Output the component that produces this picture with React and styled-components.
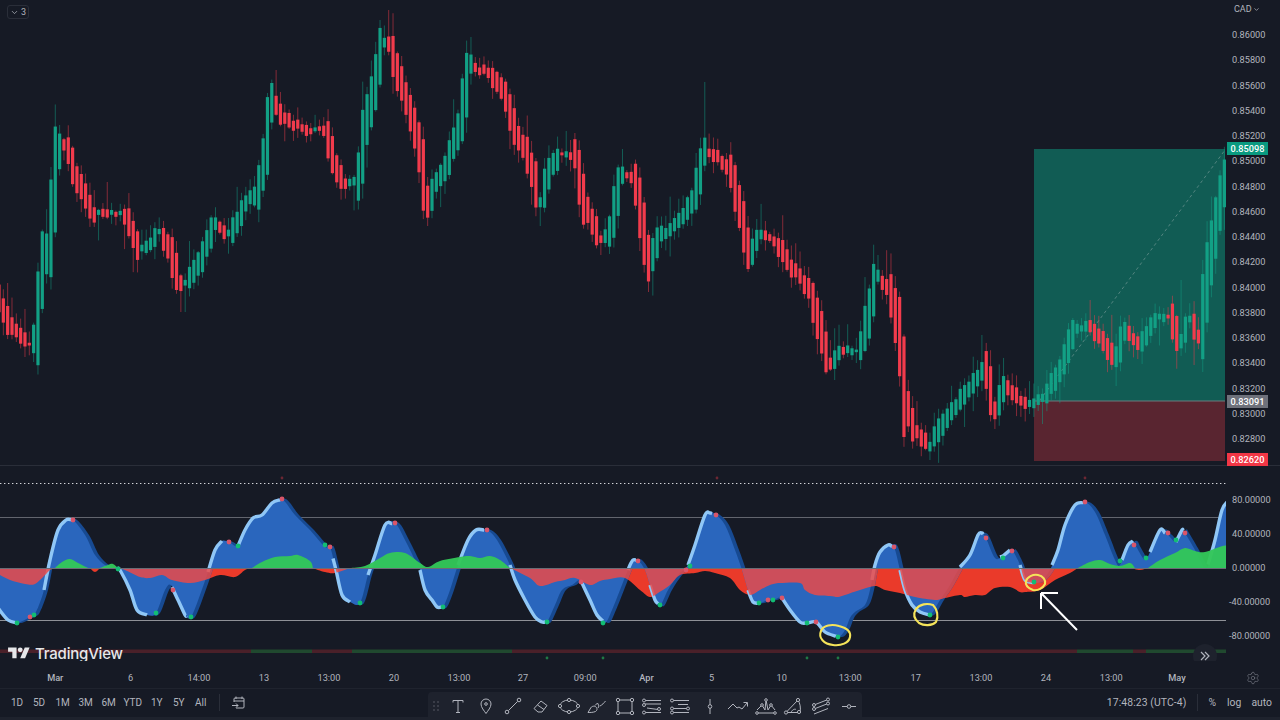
import styled, { createGlobalStyle } from "styled-components";
import { ChevronDown, Settings } from "lucide-react";

const GlobalStyle = createGlobalStyle`
  html, body {
    margin: 0;
    padding: 0;
    background: #161a25;
  }
  body {
    font-family: Roboto, "Liberation Sans", sans-serif;
    overflow: hidden;
  }
`;

const Screen = styled.div`
  width: 1280px;
  height: 720px;
  display: flex;
  flex-direction: column;
  background: #161a25;
  color: #b2b5be;
  overflow: hidden;
`;

const PaneRow = styled.div`
  display: flex;
  height: ${(p) => p.$height}px;
  flex: none;
  ${(p) => p.$divided && "border-bottom: 1px solid #2a2e39;"}
`;

const Plot = styled.div`
  position: relative;
  width: 1226px;
  flex: none;
  overflow: hidden;

  & > svg {
    display: block;
  }
`;

const PriceAxis = styled.div`
  position: relative;
  flex: 1;
  display: flex;
  flex-direction: column;
  padding-top: ${(p) => p.$top}px;
  padding-left: 6px;
`;

const AxisLabel = styled.div`
  height: ${(p) => p.$step}px;
  line-height: ${(p) => p.$step}px;
  font-size: 9.2px;
  flex: none;
  margin-left: ${(p) => (p.$negative ? "-3px" : "0")};
`;

const CurrencyLabel = styled.div`
  position: absolute;
  left: 8px;
  top: 3px;
  display: flex;
  align-items: center;
  gap: 1px;
  font-size: 9px;
  line-height: 12px;
`;

const PriceTag = styled.div`
  position: absolute;
  left: 1px;
  top: ${(p) => p.$top}px;
  width: 41px;
  height: 13px;
  line-height: 13px;
  text-align: center;
  font-size: 9.2px;
  font-weight: 500;
  color: #fff;
  background: ${(p) => p.$bg};
`;

const CollapseButton = styled.div`
  position: absolute;
  left: 7px;
  top: 5px;
  width: 22px;
  height: 14px;
  box-sizing: border-box;
  border: 1px solid #2a2e39;
  border-radius: 3px;
  display: flex;
  align-items: center;
  justify-content: center;
  gap: 2px;
  font-size: 9px;
`;

const Watermark = styled.div`
  position: absolute;
  left: 8px;
  bottom: 0;
  height: 16px;
  display: flex;
  align-items: center;
  gap: 5px;
  font-family: Inter, "Liberation Sans", sans-serif;
  font-size: 15px;
  font-weight: 500;
  letter-spacing: -0.2px;
  color: #e6e7ea;
`;

const ScrollButton = styled.div`
  position: absolute;
  left: 1193px;
  top: 178px;
  width: 24px;
  height: 24px;
  border-radius: 50%;
  background: #1e222d;
  display: flex;
  align-items: center;
  justify-content: center;
`;

const TimeRow = styled.div`
  display: flex;
  height: 28px;
  flex: none;
  box-sizing: border-box;
  padding-top: 6px;
  border-bottom: 1px solid #1f232e;
`;

const TimeTrack = styled.div`
  display: flex;
  width: 1226px;
  flex: none;
  padding-left: 16px;
  box-sizing: border-box;
  align-items: center;
`;

const TimeTick = styled.div`
  flex: none;
  text-align: center;
  font-size: 9.2px;
  font-weight: ${(p) => (p.$month ? 500 : 400)};
`;

const GearCell = styled.div`
  flex: 1;
  display: flex;
  justify-content: flex-end;
  align-items: center;
  padding-right: 20px;
  color: #787b86;
`;

const BottomBar = styled.div`
  flex: 1;
  display: grid;
  grid-template-columns: 428px 434px 1fr;
  box-shadow: inset 0 -3px 0 #1e222d;
`;

const RangeGroup = styled.div`
  display: flex;
  align-items: center;
  padding-left: 11px;
  padding-bottom: 4px;
`;

const RangeButton = styled.div`
  width: ${(p) => p.$width}px;
  font-size: 10px;
  flex: none;
`;

const BarDivider = styled.div`
  width: 1px;
  height: 17px;
  background: #2a2e39;
  margin: 0 ${(p) => p.$right}px 0 ${(p) => p.$left}px;
  flex: none;
`;

const CalendarIcon = styled.svg`
  width: 15px;
  height: 15px;
  flex: none;
`;

const DrawingToolbar = styled.div`
  display: flex;
  align-items: center;
  align-self: end;
  height: 28px;
  background: #1e222d;
  border-radius: 4px 4px 0 0;
`;

const Grip = styled.div`
  width: 16px;
  height: 10px;
  flex: none;
  display: grid;
  grid-template-columns: 2px 2px;
  grid-template-rows: repeat(3, 2px);
  gap: 2px 2px;
  justify-content: center;
  align-content: center;

  & i {
    background: #434651;
    border-radius: 50%;
  }
`;

const ToolCell = styled.div`
  width: 27.8px;
  flex: none;
  display: flex;
  justify-content: center;
  margin-left: ${(p) => (p.$shift ? "2px" : "0")};

  & svg {
    width: 22px;
    height: 18px;
    fill: none;
    stroke: #b2b5be;
    stroke-width: 1;
  }
`;

const ClockGroup = styled.div`
  display: flex;
  align-items: center;
  justify-content: flex-end;
  padding-right: 8px;
  padding-bottom: 4px;
  font-size: 10.4px;
`;

const ClockText = styled.div`
  letter-spacing: 0.1px;
`;

const ScaleToggle = styled.div`
  margin-left: ${(p) => p.$gap}px;
`;

// price path read off the chart, x / y of the candle centres
const pricePath = [
  [-2, 298], [10, 325], [20, 335], [30, 345], [37, 330], [42, 270], [50, 240], [57, 160], [62, 145], [68, 150],
  [75, 175], [85, 195], [95, 215], [110, 212], [125, 215], [140, 250], [150, 245], [160, 232], [170, 250], [180, 285],
  [188, 282], [200, 262], [215, 225], [230, 235], [245, 205], [258, 190], [265, 155], [272, 100], [282, 115], [295, 125],
  [310, 130], [325, 130], [335, 165], [345, 185], [358, 180], [365, 130], [375, 85], [383, 40], [390, 45], [400, 80],
  [410, 110], [420, 150], [428, 205], [435, 185], [445, 170], [460, 125], [470, 65], [480, 70], [490, 72], [505, 95],
  [515, 130], [525, 150], [535, 180], [540, 205], [550, 170], [560, 155], [575, 155], [585, 205], [600, 240], [610, 230],
  [622, 175], [635, 180], [650, 265], [660, 235], [670, 230], [685, 215], [695, 195], [705, 150], [715, 155], [730, 170],
  [740, 210], [750, 255], [760, 235], [775, 240], [790, 265], [810, 290], [822, 335], [830, 365], [840, 350], [860, 350],
  [870, 310], [877, 275], [890, 290], [900, 340], [905, 400], [915, 430], [930, 445], [945, 420], [960, 400], [975, 380],
  [985, 365], [995, 410], [1005, 385], [1020, 400], [1030, 405], [1045, 395], [1060, 370], [1075, 330], [1090, 325], [1105, 345],
  [1115, 360], [1125, 330], [1140, 345], [1155, 320], [1170, 315], [1180, 345], [1190, 320], [1200, 340], [1210, 260], [1218, 215],
  [1226, 175],
];

// longest wicks of the chart, x / y of the tip
const wickHighs = [[60, 125], [274, 70], [387, 10], [473, 37], [572, 140], [703, 82], [876, 255], [980, 335], [1090, 300], [1180, 280]];
const wickLows = [[33, 362], [183, 312], [427, 226], [540, 226], [600, 255], [650, 292], [750, 272], [835, 380], [930, 460], [1115, 386], [1195, 365]];

const wave = [
  [-2, 608], [8, 620], [17, 623], [30, 617], [36, 612], [44, 590], [50, 560], [58, 530], [66, 520], [73, 520],
  [85, 535], [95, 555], [105, 565], [115, 568], [120, 570], [130, 590], [137, 610], [147, 615], [156, 613], [165, 590],
  [171, 585], [178, 600], [185, 615], [191, 617], [200, 595], [208, 572], [215, 550], [222, 541], [229, 542], [238, 546],
  [245, 530], [253, 518], [262, 515], [272, 503], [282, 499], [295, 515], [310, 530], [325, 547], [330, 547], [336, 570],
  [342, 595], [350, 602], [360, 603], [368, 575], [375, 555], [385, 525], [395, 523], [405, 540], [415, 560], [420, 570],
  [425, 590], [432, 600], [437, 607], [443, 607], [450, 590], [458, 565], [468, 540], [476, 530], [487, 530], [497, 540],
  [510, 565], [515, 580], [525, 600], [535, 617], [542, 622], [547, 622], [555, 605], [562, 590], [572, 585], [581, 581],
  [590, 600], [597, 615], [605, 623], [612, 610], [620, 590], [630, 565], [633, 560], [638, 560], [645, 570], [650, 585],
  [655, 600], [660, 606], [668, 590], [678, 575], [688, 565], [695, 545], [705, 515], [710, 513], [716, 515], [725, 525],
  [735, 550], [742, 570], [748, 590], [753, 602], [760, 603], [768, 600], [773, 600], [782, 598], [790, 610], [800, 622],
  [807, 623], [816, 622], [825, 632], [838, 637], [845, 630], [850, 618], [855, 612], [865, 605], [870, 590], [875, 565],
  [880, 552], [888, 545], [894, 547], [900, 570], [905, 590], [912, 605], [920, 612], [930, 615], [940, 600], [950, 585],
  [960, 567], [970, 555], [978, 535], [982, 533], [986, 538], [995, 558], [1003, 556], [1010, 550], [1013, 551], [1020, 565],
  [1025, 580], [1035, 583], [1042, 580], [1050, 570], [1058, 550], [1065, 525], [1075, 505], [1085, 502], [1095, 512], [1105, 535],
  [1115, 560], [1120, 565], [1128, 545], [1133, 541], [1137, 548], [1145, 560], [1150, 552], [1160, 530], [1168, 535], [1176, 542],
  [1182, 530], [1185, 533], [1195, 550], [1200, 560], [1207, 568], [1215, 540], [1222, 510], [1228, 501],
];

// the pale stroke only runs on the side of each hump moving away from zero
const paleRuns = [
  [-2, 17], [44, 72], [118, 147], [172, 186], [208, 222], [238, 280], [333, 350], [368, 392], [420, 442], [458, 484],
  [510, 545], [582, 603], [628, 636], [650, 658], [688, 712], [748, 760], [782, 836], [872, 892], [900, 930], [960, 983],
  [1000, 1010], [1020, 1034], [1052, 1083], [1122, 1133], [1150, 1165], [1176, 1183], [1208, 1228],
];

const redHumps = [
  [[-2, 574], [10, 580], [25, 584], [35, 584], [45, 575], [50, 570], [55, 568]],
  [[90, 568], [95, 572], [100, 568]],
  [[118, 568], [125, 570], [140, 577], [150, 578], [162, 575], [172, 580], [190, 583], [205, 580], [220, 575], [235, 577], [245, 570], [252, 568]],
  [[312, 568], [325, 572], [335, 573], [350, 568]],
  [[510, 568], [530, 578], [540, 586], [555, 582], [565, 580], [575, 578], [590, 585], [600, 581], [610, 579], [625, 578], [640, 590], [650, 597], [658, 593], [670, 585], [680, 575], [695, 573], [705, 571], [715, 573], [730, 578], [740, 590], [750, 595], [760, 590], [770, 585], [780, 583], [800, 583], [805, 590], [815, 595], [830, 596], [838, 597], [845, 595], [860, 590], [875, 586], [885, 590], [900, 593], [915, 597], [935, 600], [945, 598], [960, 595], [965, 597], [975, 595], [985, 595], [995, 588], [1010, 587], [1020, 592], [1025, 592], [1040, 590], [1055, 580], [1070, 573], [1078, 568]],
  [[1130, 568], [1140, 570], [1148, 568]],
];

const greenHumps = [
  [[55, 568], [62, 562], [70, 559], [78, 563], [88, 568]],
  [[100, 568], [108, 565], [113, 564], [118, 568]],
  [[252, 568], [262, 562], [275, 557], [290, 556], [298, 555], [310, 561], [313, 568]],
  [[350, 568], [365, 566], [380, 558], [390, 553], [405, 553], [420, 563], [428, 567], [440, 561], [460, 557], [470, 556], [480, 558], [490, 556], [500, 560], [510, 568]],
  [[1078, 568], [1090, 562], [1100, 560], [1110, 564], [1120, 566], [1130, 563], [1135, 568]],
  [[1148, 568], [1160, 560], [1175, 553], [1185, 548], [1195, 551], [1205, 552], [1228, 546], [1228, 568]],
];

const greenDots = [
  [17, 623], [34, 615], [118, 569], [156, 613], [191, 617], [238, 546], [325, 545], [360, 603], [443, 607], [547, 622],
  [603, 623], [660, 605], [690, 566], [759, 603], [773, 600], [807, 623], [838, 637], [930, 615], [1003, 558], [1034, 582],
  [1120, 561], [1176, 540], [1146, 558],
];
const redDots = [
  [30, 617], [73, 520], [173, 590], [229, 542], [282, 499], [330, 547], [395, 523], [487, 530], [581, 582], [638, 561],
  [686, 570], [716, 515], [768, 600], [782, 598], [816, 622], [894, 547], [986, 538], [1012, 551], [1085, 502], [1134, 545],
  [1168, 533], [1185, 533],
];

const strip = [
  [0, 251, "#4a2029"], [251, 312, "#20492f"], [312, 352, "#4a2029"], [352, 512, "#20492f"], [512, 1077, "#4a2029"],
  [1077, 1133, "#20492f"], [1133, 1146, "#4a2029"], [1146, 1226, "#20492f"],
];

const timeTicks = [
  ["Mar", 55, true], ["6", 134], ["14:00", 199], ["13", 264], ["13:00", 329], ["20", 394], ["13:00", 459], ["27", 524],
  ["09:00", 585], ["Apr", 647, true], ["5", 707], ["10", 785], ["13:00", 850], ["17", 916], ["13:00", 981], ["24", 1046],
  ["13:00", 1111], ["May", 1177, true],
];

const upperLabels = [
  "0.86000", "0.85800", "0.85600", "0.85400", "0.85200", "0.85000", "0.84800", "0.84600", "0.84400",
  "0.84200", "0.84000", "0.83800", "0.83600", "0.83400", "0.83200", "0.83000", "0.82800",
];
const lowerLabels = ["80.00000", "40.00000", "0.00000", "-40.00000", "-80.00000"];

const ranges = [
  ["1D", 22], ["5D", 22.5], ["1M", 23], ["3M", 23], ["6M", 22], ["YTD", 27.500], ["1Y", 22], ["5Y", 22], ["All", 24],
];

const interp = (points, x) => {
  for (let i = 1; i < points.length; i++) {
    if (x <= points[i][0]) {
      const [x0, y0] = points[i - 1];
      const [x1, y1] = points[i];
      return y0 + ((y1 - y0) * (x - x0)) / (x1 - x0);
    }
  }
  return points[points.length - 1][1];
};

const smooth = (pts) => {
  let d = `M${pts[0][0]} ${pts[0][1]}`;
  for (let i = 0; i < pts.length - 1; i++) {
    const p0 = pts[i - 1] || pts[i];
    const p1 = pts[i];
    const p2 = pts[i + 1];
    const p3 = pts[i + 2] || p2;
    const c1x = p1[0] + (p2[0] - p0[0]) / 6;
    const c1y = p1[1] + (p2[1] - p0[1]) / 6;
    const c2x = p2[0] - (p3[0] - p1[0]) / 6;
    const c2y = p2[1] - (p3[1] - p1[1]) / 6;
    d += `C${c1x.toFixed(1)} ${c1y.toFixed(1)} ${c2x.toFixed(1)} ${c2y.toFixed(1)} ${p2[0]} ${p2[1].toFixed(1)}`;
  }
  return d;
};

const toZero = (pts, dx = 0) => {
  const moved = pts.map(([x, y]) => [x + dx, y]);
  return `${smooth(moved)}L${moved[moved.length - 1][0]} 568L${moved[0][0]} 568Z`;
};

const paleRun = ([a, b]) => {
  const inner = wave.filter(([x]) => x > a && x < b);
  return smooth([[a, interp(wave, a)], ...inner, [b, interp(wave, b)]]);
};

const nearest = (list, x) => list.find(([px]) => Math.abs(px - x) <= 2.2);

const makeCandles = () => {
  let seed = 4711;
  const rnd = () => {
    seed = (seed * 16807) % 2147483647;
    return seed / 2147483647;
  };
  const out = [];
  for (let i = 0; i < 284; i++) {
    const x = -1 + i * 4.33;
    const slope = interp(pricePath, x + 2.2) - interp(pricePath, x - 2.2);
    const center = interp(pricePath, x) + (rnd() - 0.5) * 4;
    const half = 0.8 + Math.abs(slope) * 1.1 + rnd() * 3.2;
    const up = Math.abs(slope) < 1.2 ? rnd() > 0.5 : slope < 0;
    const topTail = rnd() > 0.72 ? 28 : 12;
    const lowTail = rnd() > 0.72 ? 26 : 12;
    const peak = nearest(wickHighs, x);
    const dip = nearest(wickLows, x);
    out.push({
      x,
      up,
      top: center - half,
      height: half * 2,
      high: peak ? peak[1] : center - half - rnd() * topTail - 1,
      low: dip ? dip[1] : center + half + rnd() * lowTail + 1,
    });
  }
  return out;
};

const candles = makeCandles();

const CandleChart = () => (
  <svg width="1226" height="465" viewBox="0 0 1226 465">
    <rect x="1034" y="149" width="191" height="252" fill="#115c54" />
    <rect x="1034" y="401" width="191" height="60" fill="#592530" />
    <line x1="1034" y1="401" x2="1225" y2="401" stroke="#6d7a7c" strokeWidth="1.2" />
    <line x1="1040" y1="400" x2="1225" y2="150" stroke="#b9c4c4" strokeOpacity="0.4" strokeDasharray="3 3" />
    {candles.map((c) => {
      const color = c.up ? "#12a085" : "#f23b4c";
      return (
        <g key={c.x}>
          <line x1={c.x} x2={c.x} y1={c.high} y2={c.low} stroke={color} strokeOpacity="0.5" />
          <rect x={c.x - 1.6} y={c.top} width="3.2" height={c.height} fill={color} />
        </g>
      );
    })}
  </svg>
);

const OscillatorChart = () => (
  <svg width="1226" height="195" viewBox="0 466 1226 195">
    <defs>
      <clipPath id="blue-body">
        <path d={toZero(wave)} />
        <path d={toZero(wave, 4)} />
      </clipPath>
    </defs>
    <line x1="0" x2="1226" y1="483.5" y2="483.5" stroke="#d5d7dc" strokeDasharray="1.4 2.6" />
    <line x1="0" x2="1226" y1="517.5" y2="517.5" stroke="#62656e" />
    <line x1="0" x2="1226" y1="620.5" y2="620.5" stroke="#8f9197" />
    {redHumps.map((h, i) => (
      <path key={i} d={toZero(h)} fill="#ea3a2a" />
    ))}
    <path d={toZero(wave, 4)} fill="#174a92" />
    <path d={toZero(wave)} fill="#2a66bd" />
    {paleRuns.map((r) => (
      <path key={r[0]} d={paleRun(r)} fill="none" stroke="#90c7f6" strokeWidth="3.4" />
    ))}
    <g clipPath="url(#blue-body)">
      {redHumps.map((h, i) => (
        <path key={i} d={toZero(h)} fill="#ec4a47" fillOpacity="0.84" />
      ))}
    </g>
    {greenHumps.map((h, i) => (
      <path key={i} d={toZero(h)} fill="#33c758" fillOpacity="0.96" />
    ))}
    <line x1="0" x2="1226" y1="568.5" y2="568.5" stroke="#6a6c75" />
    {redDots.map(([x, y]) => (
      <circle key={x} cx={x} cy={y} r="2.4" fill="#d9566a" />
    ))}
    {greenDots.map(([x, y]) => (
      <circle key={x} cx={x} cy={y} r="2.4" fill="#12bd74" />
    ))}
    {strip.map(([a, b, color]) => (
      <rect key={a} x={a} y="649.5" width={b - a} height="3.5" fill={color} />
    ))}
    {[547, 603, 807, 838].map((x) => (
      <circle key={x} cx={x} cy="658" r="1.4" fill="#1f7a45" />
    ))}
    {[282, 717, 1085].map((x) => (
      <circle key={x} cx={x} cy="478" r="1.4" fill="#6d2733" />
    ))}
    <g fill="none" stroke="#f5e45a" strokeWidth="2.1">
      <path d="M821 631c2-6 11-7 18-5 8 2 12 6 11 11-1 6-9 9-17 8-9-1-15-7-12-14z" />
      <path d="M916 609c4-5 11-6 17-4 4 4 6 11 3 17-4 4-12 4-17 1-5-4-6-9-3-14z" />
      <path d="M1026 581c1-4 7-7 12-6 5 1 8 5 7 9-2 4-7 7-12 6-5-2-8-5-7-9z" />
    </g>
    <path d="M1077 630L1041 593M1041 593H1058M1041 593V609" fill="none" stroke="#fff" strokeWidth="2" />
  </svg>
);

const toolIcons = [
  <path key="t" d="M6 3.500h10M6 3.500v2M16 3.500v2M11 3.500v12M9 15.500h4" />,
  <g key="pin">
    <path d="M11 16.500c-2-3-5-6-5-9.500a5 5 0 0 1 10 0c0 3.500-3 6.500-5 9.500z" />
    <circle cx="11" cy="7" r="1.300" />
  </g>,
  <g key="line">
    <path d="M6.500 13.500L15.500 4.500" />
    <circle cx="5" cy="15" r="1.800" />
    <circle cx="17" cy="3" r="1.800" />
  </g>,
  <path key="eraser" d="M8 15L4 11.500L11 4L17 8.500L12 15H8ZM7.500 8L14 12.500" />,
  <g key="ellipse">
    <ellipse cx="11" cy="9" rx="9" ry="6" />
    <circle cx="2" cy="9" r="1.600" fill="#1e222d" />
    <circle cx="20" cy="9" r="1.600" fill="#1e222d" />
    <circle cx="11" cy="3" r="1.600" fill="#1e222d" />
    <circle cx="11" cy="15" r="1.600" fill="#1e222d" />
  </g>,
  <path key="brush" d="M2 15.500L5 10.500C6 9 9 8.500 10.500 10.500C11.500 12 11 13.500 9.500 14.500C7 15.500 4.500 15.500 2 15.500ZM9 8.500L11.500 6L13 9L12 11M14 9C16 8 18 6 19.500 4" />,
  <g key="rect">
    <rect x="4" y="3" width="14" height="13" />
    <circle cx="4" cy="3" r="1.700" fill="#1e222d" />
    <circle cx="18" cy="3" r="1.700" fill="#1e222d" />
    <circle cx="4" cy="16" r="1.700" fill="#1e222d" />
    <circle cx="18" cy="16" r="1.700" fill="#1e222d" />
  </g>,
  <g key="fib">
    <path d="M4 3.500H20M4 7H20M6 11L17 12.500M4 15.500H20" />
    <circle cx="3" cy="3.500" r="1.500" fill="#1e222d" />
    <circle cx="3" cy="8" r="1.500" fill="#1e222d" />
    <circle cx="18" cy="12" r="1.500" fill="#1e222d" />
    <circle cx="3" cy="15.500" r="1.500" fill="#1e222d" />
  </g>,
  <g key="fib2">
    <path d="M4 3.500H20M9 7.500H19M4 11.500H20M4 15.500H20" />
    <circle cx="3" cy="3.500" r="1.500" fill="#1e222d" />
    <circle cx="3" cy="11.500" r="1.500" fill="#1e222d" />
    <circle cx="19" cy="11.500" r="1.500" fill="#1e222d" />
    <circle cx="3" cy="15.500" r="1.500" fill="#1e222d" />
  </g>,
  <g key="vertical">
    <path d="M11 2V17" />
    <circle cx="11" cy="9.500" r="1.800" fill="#1e222d" />
  </g>,
  <path key="path" d="M1 12L6 7L10 11L12 10L15 12L20 6M16.500 5.500H20.500V9.500" />,
  <g key="pattern">
    <path d="M2 13L7 8L10 13L11 3L13 13L16 8L20 13M2 16H20" />
    <circle cx="2" cy="16" r="1.300" fill="#1e222d" />
    <circle cx="7" cy="8" r="1.300" fill="#1e222d" />
    <circle cx="11" cy="3" r="1.300" fill="#1e222d" />
    <circle cx="16" cy="8" r="1.300" fill="#1e222d" />
    <circle cx="20" cy="16" r="1.300" fill="#1e222d" />
  </g>,
  <g key="fan">
    <path d="M4 15.500L16 3M4 15.500H18C19 11 18 6 16 3M9 15.500C10 13 12.500 11.500 14 12.500" />
    <circle cx="4" cy="15.500" r="1.600" fill="#1e222d" />
    <circle cx="16" cy="3" r="1.600" fill="#1e222d" />
    <circle cx="17" cy="15" r="1.600" fill="#1e222d" />
  </g>,
  <g key="channel">
    <path d="M4 8L18 2.500M4 12L18 6.500M4 17L18 11.500" />
    <circle cx="18" cy="2.500" r="1.500" fill="#1e222d" />
    <circle cx="4" cy="8" r="1.500" fill="#1e222d" />
    <circle cx="18" cy="6.500" r="1.500" fill="#1e222d" />
    <circle cx="4" cy="12" r="1.500" fill="#1e222d" />
  </g>,
  <g key="hline">
    <path d="M4 9.500H18" />
    <circle cx="11" cy="9.500" r="1.800" fill="#1e222d" />
  </g>,
];

export default function App() {
  return (
    <Screen>
      <GlobalStyle />
      <PaneRow $height={465} $divided>
        <Plot>
          <CandleChart />
          <CollapseButton>
            <ChevronDown size={9} strokeWidth={2} />3
          </CollapseButton>
        </Plot>
        <PriceAxis $top={22}>
          <CurrencyLabel>
            CAD <ChevronDown size={7} strokeWidth={2.5} />
          </CurrencyLabel>
          {upperLabels.map((l) => (
            <AxisLabel key={l} $step={25.25}>
              {l}
            </AxisLabel>
          ))}
          <PriceTag $top={142} $bg="#0a9a80">0.85098</PriceTag>
          <PriceTag $top={395} $bg="#6e717b">0.83091</PriceTag>
          <PriceTag $top={453} $bg="#f23645">0.82620</PriceTag>
        </PriceAxis>
      </PaneRow>
      <PaneRow $height={195}>
        <Plot>
          <OscillatorChart />
          <Watermark>
            <svg width="22" height="17" viewBox="0 0 36 28" fill="#e6e7ea">
              <path d="M14 22H7V11H0V4h14v18zM28 22h-8l7.500-18h8L28 22z" />
              <circle cx="20" cy="8" r="4" />
            </svg>
            TradingView
          </Watermark>
          <ScrollButton>
            <svg width="12" height="12" viewBox="0 0 12 12" fill="none" stroke="#b2b5be" strokeWidth="1.2">
              <path d="M2 2l4 4-4 4M6 2l4 4-4 4" />
            </svg>
          </ScrollButton>
        </Plot>
        <PriceAxis $top={17}>
          {lowerLabels.map((l) => (
            <AxisLabel key={l} $step={34} $negative={l.startsWith("-")}>
              {l}
            </AxisLabel>
          ))}
        </PriceAxis>
      </PaneRow>
      <TimeRow>
        <TimeTrack>
          {timeTicks.map(([label, x, month], i) => {
            const left = i === 0 ? 16 : (timeTicks[i - 1][1] + x) / 2;
            const right = i === timeTicks.length - 1 ? 2 * x - left : (timeTicks[i + 1][1] + x) / 2;
            return (
              <TimeTick key={x} $month={month} style={{ width: right - left }}>
                {label}
              </TimeTick>
            );
          })}
        </TimeTrack>
        <GearCell>
          <Settings size={14} strokeWidth={1.1} />
        </GearCell>
      </TimeRow>
      <BottomBar>
        <RangeGroup>
          {ranges.map(([label, width]) => (
            <RangeButton key={label} $width={width}>
              {label}
            </RangeButton>
          ))}
          <BarDivider $left={0} $right={11} />
          <CalendarIcon viewBox="0 0 15 15" fill="none" stroke="#b2b5be" strokeWidth="1">
            <path d="M3 7V4a1 1 0 0 1 1-1h8a1 1 0 0 1 1 1v8a1 1 0 0 1-1 1H5M3 6h10M5 1.500V4M11 1.500V4M1 10.500h6M5 8.500l2 2-2 2" />
          </CalendarIcon>
        </RangeGroup>
        <DrawingToolbar>
          <Grip>
            {[0, 1, 2, 3, 4, 5].map((n) => (
              <i key={n} />
            ))}
          </Grip>
          {toolIcons.map((icon, i) => (
            <ToolCell key={i} $shift={i === 9}>
              <svg viewBox="0 0 22 18">{icon}</svg>
            </ToolCell>
          ))}
        </DrawingToolbar>
        <ClockGroup>
          <ClockText>17:48:23 (UTC-4)</ClockText>
          <BarDivider $left={11} $right={10} />
          <ScaleToggle $gap={0}>%</ScaleToggle>
          <ScaleToggle $gap={11}>log</ScaleToggle>
          <ScaleToggle $gap={10}>auto</ScaleToggle>
        </ClockGroup>
      </BottomBar>
    </Screen>
  );
}
